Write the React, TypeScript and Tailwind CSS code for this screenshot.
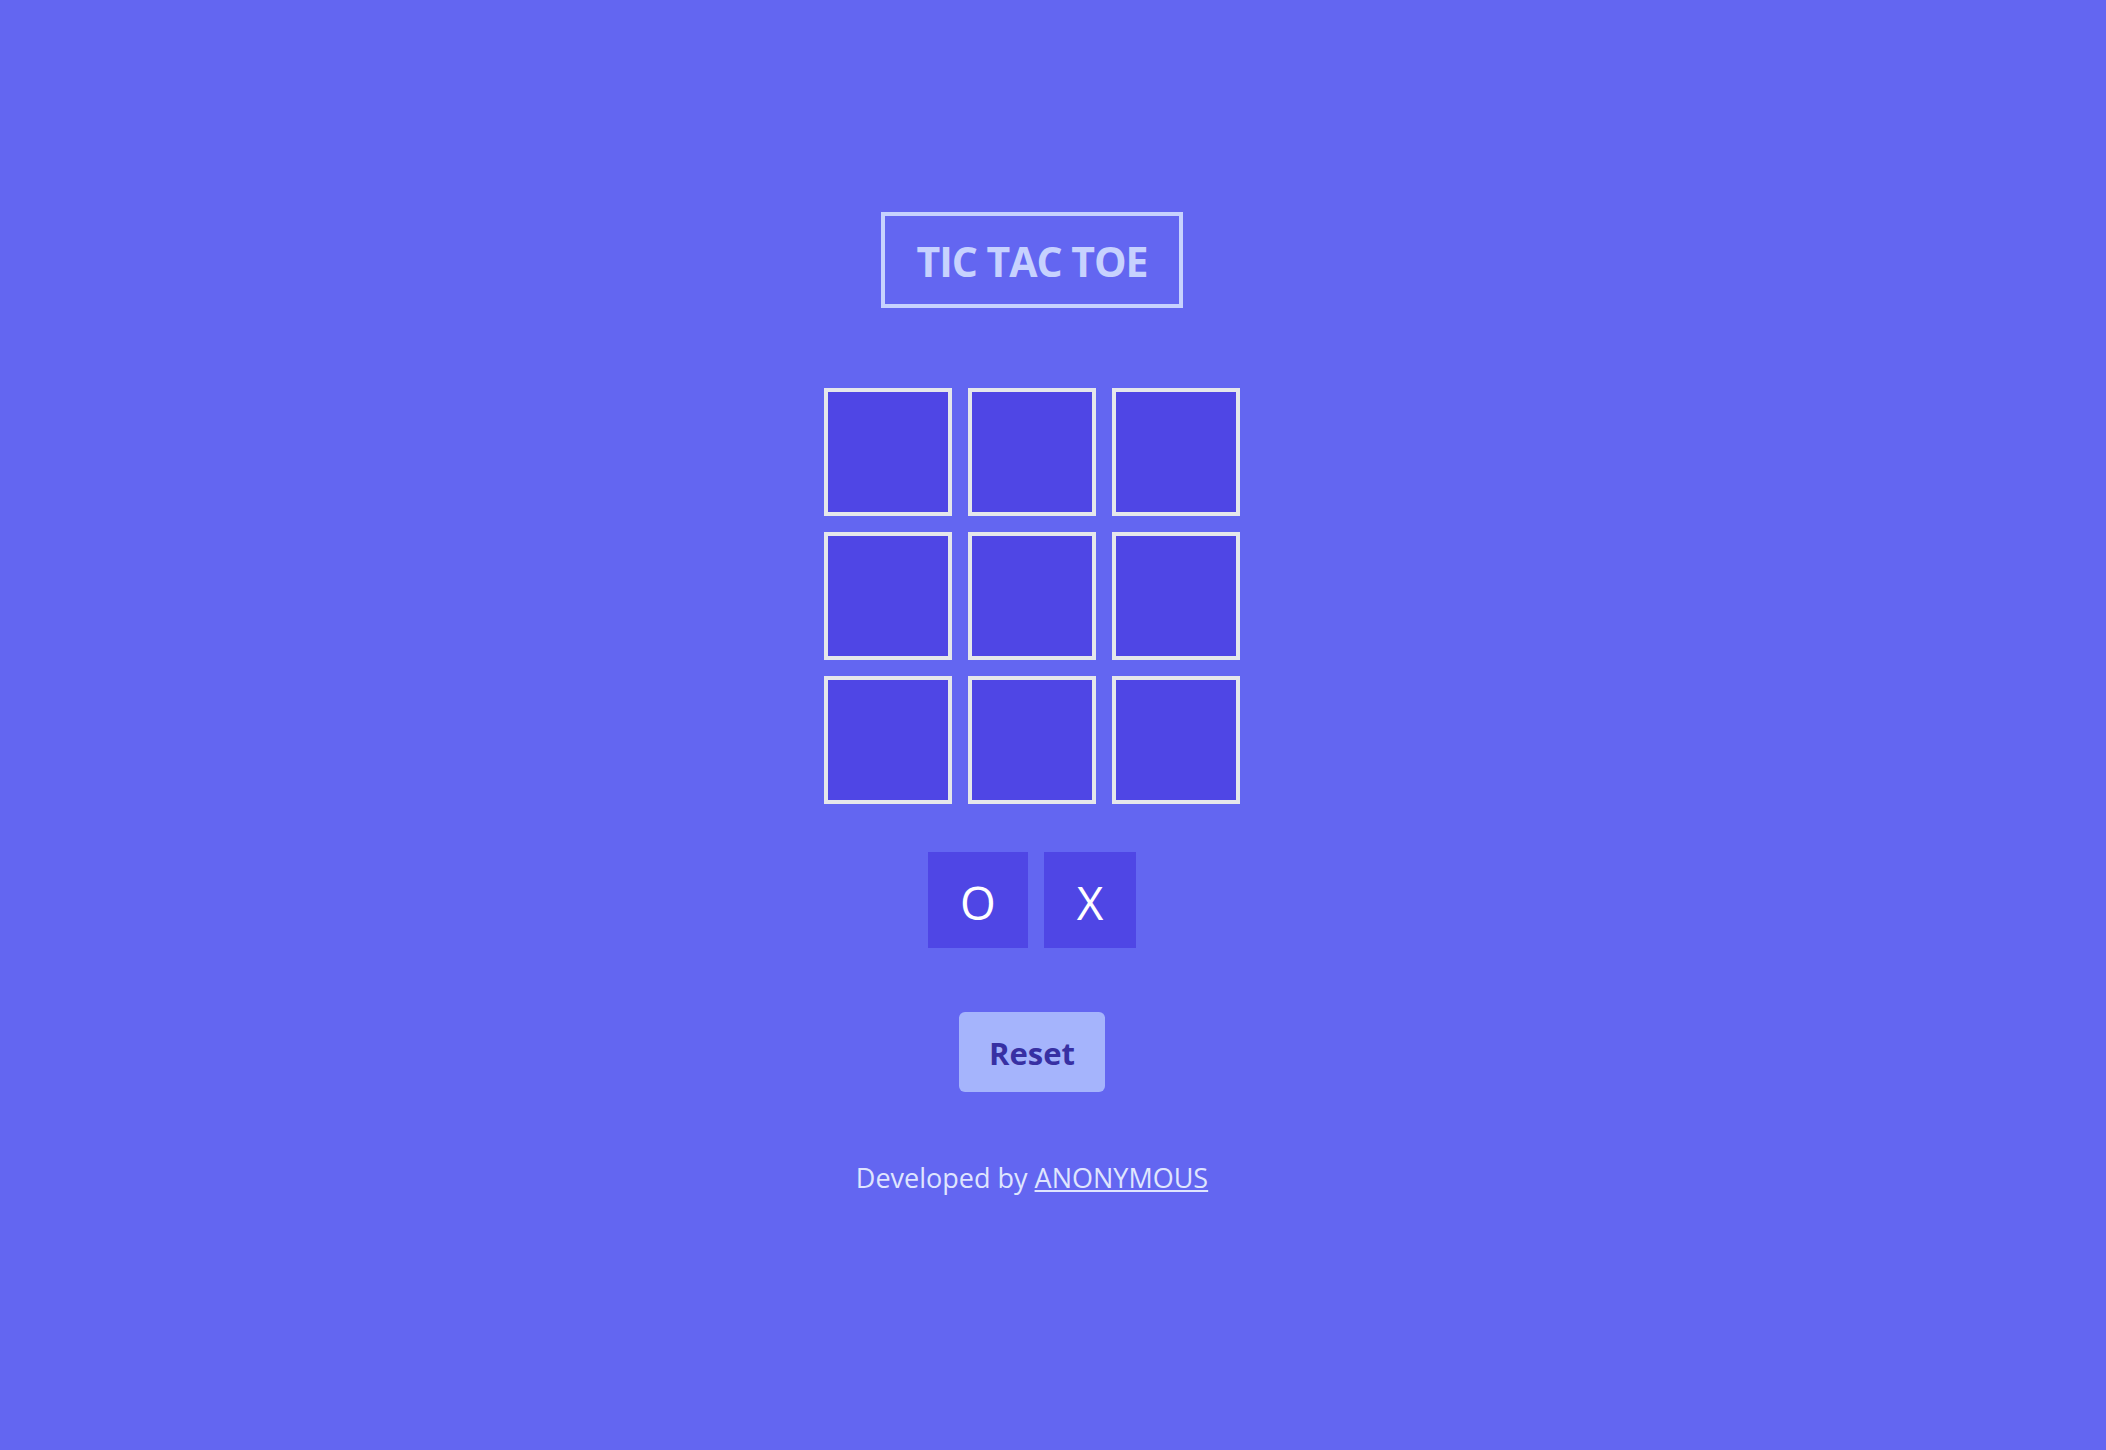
export default function App() {
  const cells = Array.from({ length: 9 })

  return (
    <main
      className="min-h-screen w-full bg-[#6366f1] flex flex-col items-center pt-[212px] pr-[42px]"
      style={{ fontFamily: '"Open Sans", "Noto Sans", sans-serif' }}
    >
      {/* title */}
      <h1 className="w-[302px] h-[96px] pt-1 border-4 border-[#c7d2fe] flex items-center justify-center text-[41px] font-bold text-[#c7d2fe] tracking-tight">
        TIC TAC TOE
      </h1>

      {/* board */}
      <div className="mt-20 grid grid-cols-3 gap-4">
        {cells.map((_, i) => (
          <button
            key={i}
            className="w-32 h-32 border-4 border-[#e5e7eb] bg-[#4f46e5]"
          />
        ))}
      </div>

      {/* player pick */}
      <div className="mt-12 flex gap-4">
        <button className="w-[100px] h-24 pt-1 bg-[#4f46e5] text-white text-[46px] leading-none flex items-center justify-center">
          O
        </button>
        <button className="w-[92px] h-24 pt-1 bg-[#4f46e5] text-white text-[46px] leading-none flex items-center justify-center">
          X
        </button>
      </div>

      <button className="mt-16 w-[146px] h-20 pt-0.5 rounded-md bg-[#a5b4fc] text-[#3730a3] text-[31px] font-bold">
        Reset
      </button>

      <p className="mt-[66px] text-[27px] leading-[40px] text-[#dfe5fe]">
        Developed by <a className="underline">ANONYMOUS</a>
      </p>
    </main>
  )
}
